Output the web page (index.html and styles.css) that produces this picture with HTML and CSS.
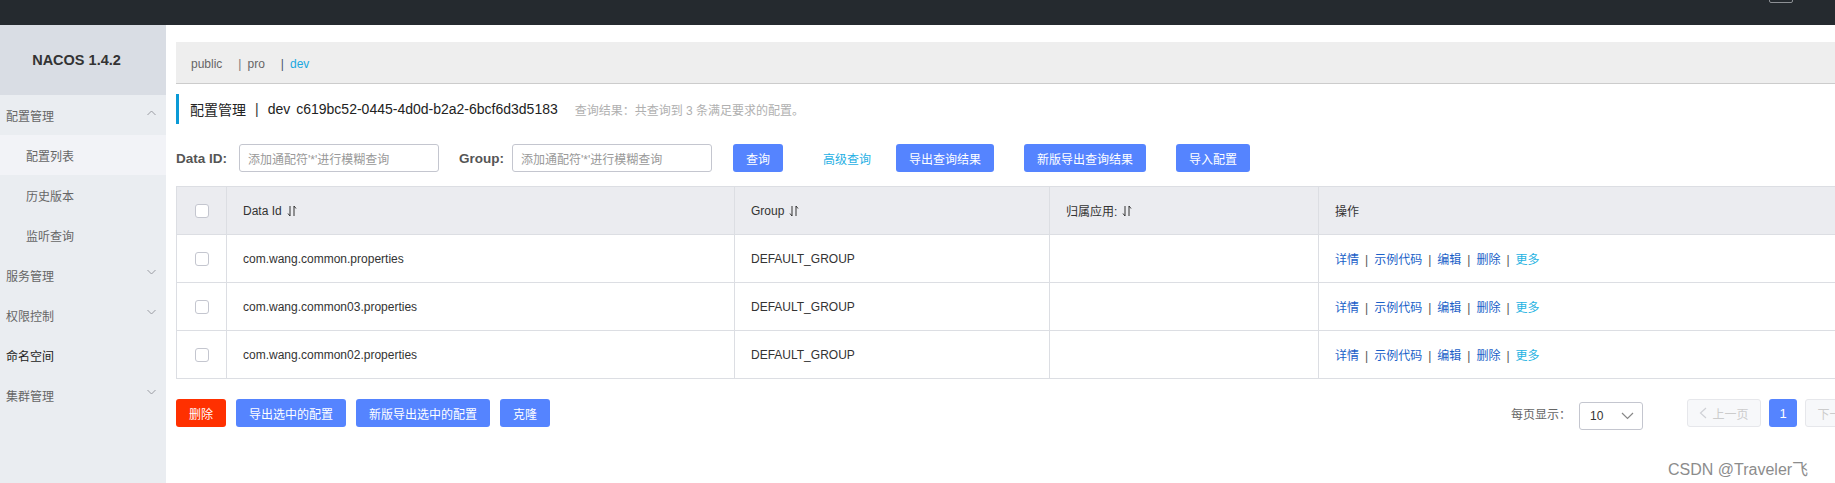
FILE: index.html
```html
<!DOCTYPE html>
<html lang="zh-CN">
<head>
<meta charset="utf-8">
<title>NACOS 1.4.2</title>
<link rel="stylesheet" href="styles.css">
</head>
<body>
<header class="topbar"><div class="lang-box"></div></header>
<div class="layout">
  <aside class="sidebar">
    <div class="logo">NACOS 1.4.2</div>
    <ul class="menu">
      <li class="menu-item"><span>配置管理</span><svg class="chev" width="9" height="6" viewBox="0 0 9 6"><path d="M0.5 5 L4.5 1 L8.5 5" fill="none" stroke="#9a9ca3" stroke-width="1"/></svg></li>
      <li class="sub-item active">配置列表</li>
      <li class="sub-item">历史版本</li>
      <li class="sub-item">监听查询</li>
      <li class="menu-item"><span>服务管理</span><svg class="chev down" width="9" height="6" viewBox="0 0 9 6"><path d="M0.5 1 L4.5 5 L8.5 1" fill="none" stroke="#9a9ca3" stroke-width="1"/></svg></li>
      <li class="menu-item"><span>权限控制</span><svg class="chev down" width="9" height="6" viewBox="0 0 9 6"><path d="M0.5 1 L4.5 5 L8.5 1" fill="none" stroke="#9a9ca3" stroke-width="1"/></svg></li>
      <li class="menu-item dark"><span>命名空间</span></li>
      <li class="menu-item"><span>集群管理</span><svg class="chev down" width="9" height="6" viewBox="0 0 9 6"><path d="M0.5 1 L4.5 5 L8.5 1" fill="none" stroke="#9a9ca3" stroke-width="1"/></svg></li>
    </ul>
  </aside>
  <main class="main">
    <div class="content">
      <div class="ns-bar">
        <span class="ns">public</span>
        <span class="ns"><span class="ns-pipe">|</span>pro</span>
        <span class="ns current"><span class="ns-pipe dark">|</span>dev</span>
      </div>

      <div class="page-title">
        <span class="title-main">配置管理</span>
        <span class="title-sep">|</span>
        <span>dev</span>
        <span class="title-id">c619bc52-0445-4d0d-b2a2-6bcf6d3d5183</span>
        <span class="title-info">查询结果：共查询到 3 条满足要求的配置。</span>
      </div>

      <div class="search-row">
        <span class="label label-id">Data ID:</span>
        <div class="input"><span class="placeholder">添加通配符'*'进行模糊查询</span></div>
        <span class="label label-group">Group:</span>
        <div class="input"><span class="placeholder">添加通配符'*'进行模糊查询</span></div>
        <span class="btn btn-primary btn-query">查询</span>
        <span class="link-adv">高级查询</span>
        <span class="btn btn-primary btn-export">导出查询结果</span>
        <span class="btn btn-primary btn-gap30">新版导出查询结果</span>
        <span class="btn btn-primary btn-gap30">导入配置</span>
      </div>

      <table class="grid">
        <colgroup>
          <col class="c-check"><col class="c-id"><col class="c-group"><col class="c-app"><col class="c-op">
        </colgroup>
        <thead>
          <tr>
            <th class="cell-check"><span class="checkbox"></span></th>
            <th><span class="th-inner">Data Id<svg class="sort" width="10" height="12" viewBox="0 0 10 12"><path d="M3 1 V11 L1 8.5 M7 11 V1 L9 3.5" fill="none" stroke="#333" stroke-width="1"/></svg></span></th>
            <th><span class="th-inner">Group<svg class="sort" width="10" height="12" viewBox="0 0 10 12"><path d="M3 1 V11 L1 8.5 M7 11 V1 L9 3.5" fill="none" stroke="#333" stroke-width="1"/></svg></span></th>
            <th><span class="th-inner">归属应用:<svg class="sort" width="10" height="12" viewBox="0 0 10 12"><path d="M3 1 V11 L1 8.5 M7 11 V1 L9 3.5" fill="none" stroke="#333" stroke-width="1"/></svg></span></th>
            <th>操作</th>
          </tr>
        </thead>
        <tbody>
          <tr>
            <td class="cell-check"><span class="checkbox"></span></td>
            <td>com.wang.common.properties</td>
            <td>DEFAULT_GROUP</td>
            <td></td>
            <td class="ops"><a>详情</a><span class="op-sep">|</span><a>示例代码</a><span class="op-sep">|</span><a>编辑</a><span class="op-sep">|</span><a>删除</a><span class="op-sep">|</span><a class="more">更多</a></td>
          </tr>
          <tr>
            <td class="cell-check"><span class="checkbox"></span></td>
            <td>com.wang.common03.properties</td>
            <td>DEFAULT_GROUP</td>
            <td></td>
            <td class="ops"><a>详情</a><span class="op-sep">|</span><a>示例代码</a><span class="op-sep">|</span><a>编辑</a><span class="op-sep">|</span><a>删除</a><span class="op-sep">|</span><a class="more">更多</a></td>
          </tr>
          <tr>
            <td class="cell-check"><span class="checkbox"></span></td>
            <td>com.wang.common02.properties</td>
            <td>DEFAULT_GROUP</td>
            <td></td>
            <td class="ops"><a>详情</a><span class="op-sep">|</span><a>示例代码</a><span class="op-sep">|</span><a>编辑</a><span class="op-sep">|</span><a>删除</a><span class="op-sep">|</span><a class="more">更多</a></td>
          </tr>
        </tbody>
      </table>

      <div class="footer-row">
        <div class="batch">
          <span class="btn btn-danger">删除</span>
          <span class="btn btn-primary">导出选中的配置</span>
          <span class="btn btn-primary">新版导出选中的配置</span>
          <span class="btn btn-primary">克隆</span>
        </div>
        <div class="pager">
          <span class="page-size-label">每页显示：</span>
          <div class="select"><span>10</span><svg width="13" height="8" viewBox="0 0 13 8"><path d="M1 1 L6.5 6.5 L12 1" fill="none" stroke="#888" stroke-width="1.2"/></svg></div>
          <span class="page-btn disabled prev"><svg width="8" height="12" viewBox="0 0 8 12"><path d="M7 1 L1.5 6 L7 11" fill="none" stroke="#cfd1d6" stroke-width="1.2"/></svg>上一页</span>
          <span class="page-num">1</span>
          <span class="page-btn disabled next">下一页<svg width="8" height="12" viewBox="0 0 8 12"><path d="M1 1 L6.5 6 L1 11" fill="none" stroke="#cfd1d6" stroke-width="1.2"/></svg></span>
        </div>
      </div>
    </div>
  </main>
</div>
<div class="watermark">CSDN @Traveler飞</div>
</body>
</html>
```

FILE: styles.css
```css
* { box-sizing: border-box; }
html, body {
  margin: 0;
  padding: 0;
  width: 1835px;
  height: 483px;
  overflow: hidden;
  background: #fff;
  font-family: "Liberation Sans", "Noto Sans CJK SC", sans-serif;
  font-size: 12px;
  color: #333;
}
.topbar {
  height: 25px;
  background: #252a2f;
  display: flex;
  justify-content: flex-end;
  padding-right: 42px;
  overflow: hidden;
}
.lang-box {
  width: 24px;
  height: 23px;
  margin-top: -20px;
  border: 1px solid #8d9095;
  border-radius: 2px;
}
.layout {
  display: flex;
  height: 458px;
}
.sidebar {
  width: 166px;
  flex-shrink: 0;
  background: #eaedf1;
}
.logo {
  height: 70px;
  background: #d9dde4;
  display: flex;
  align-items: center;
  justify-content: center;
  padding-right: 13px;
  font-weight: bold;
  font-size: 14.5px;
  color: #333;
}
.menu {
  list-style: none;
  margin: 0;
  padding: 0;
}
.menu-item, .sub-item {
  height: 40px;
  display: flex;
  align-items: center;
  justify-content: space-between;
  font-size: 12px;
  color: #666;
}
.menu-item { padding: 0 10px 0 6px; }
.sub-item { padding-left: 26px; }
.sub-item.active { background: #f2f3f7; }
.menu-item.dark { color: #222; }
.chev { margin-top: -4px; }
.chev.down { margin-top: -6px; }

.main {
  flex: 1;
  overflow: hidden;
  padding: 17px 0 0 10px;
}
.content { width: 1703px; }

.ns-bar {
  height: 42px;
  background: #eee;
  border-bottom: 1px solid #ccc;
  display: flex;
  align-items: center;
  padding: 3px 0 0 15px;
  color: #666;
  font-size: 12px;
}
.ns { margin-right: 16px; }
.ns-pipe { margin-right: 6px; color: #777; }
.ns-pipe.dark { color: #4a5270; }
.ns.current { color: #1aa8e0; }

.page-title {
  margin-top: 10px;
  height: 30px;
  border-left: 3px solid #0a9ad6;
  padding-left: 11px;
  display: flex;
  align-items: center;
  font-size: 14px;
  color: #222;
}
.title-sep { margin: 0 9px; color: #333; }
.title-id { margin-left: 6px; }
.title-info { margin-left: 17px; font-size: 12px; color: #b0b0b0; }

.search-row {
  margin-top: 20px;
  height: 28px;
  display: flex;
  align-items: center;
}
.label {
  font-weight: bold;
  font-size: 13.5px;
  color: #555;
}
.label-id { width: 63px; }
.label-group { width: 53px; margin-left: 20px; }
.input {
  width: 200px;
  height: 28px;
  border: 1px solid #c4c6cf;
  border-radius: 3px;
  padding: 0 8px;
  display: flex;
  align-items: center;
}
.placeholder { color: #999; font-size: 12px; white-space: nowrap; }
.btn {
  height: 28px;
  padding: 0 13px;
  border-radius: 3px;
  display: inline-flex;
  align-items: center;
  justify-content: center;
  color: #fff;
  font-size: 12px;
  white-space: nowrap;
}
.btn-primary { background: #5584ff; }
.btn-danger { background: #ff3000; }
.btn-query { margin-left: 21px; }
.link-adv { margin-left: 40px; color: #1fb0e4; font-size: 12px; }
.btn-export { margin-left: 25px; }
.btn-gap30 { margin-left: 30px; }

.grid {
  margin-top: 14px;
  width: 100%;
  table-layout: fixed;
  border-collapse: collapse;
  border: 1px solid #dcdee3;
  font-size: 12px;
  color: #333;
}
.c-check { width: 50px; }
.c-id { width: 508px; }
.c-group { width: 315px; }
.c-app { width: 269px; }
.grid tr { height: 48px; }
.grid th, .grid td {
  border: 1px solid #dcdee3;
  padding: 0 16px;
  text-align: left;
  vertical-align: middle;
  font-weight: normal;
  white-space: nowrap;
}
.grid th { background: #ebecf0; }
.grid .cell-check { padding: 0; text-align: center; }
.checkbox {
  display: inline-block;
  width: 14px;
  height: 14px;
  border: 1px solid #c4c6cf;
  border-radius: 3px;
  background: #fff;
  vertical-align: middle;
}
.th-inner { display: inline-flex; align-items: center; }
.sort { margin-left: 5px; }
.ops a { color: #1a5fc8; }
.ops a.more { color: #26b3e2; }
.op-sep { margin: 0 6px; color: #555; }

.footer-row {
  margin-top: 20px;
  height: 28px;
  display: flex;
  justify-content: space-between;
  align-items: center;
}
.batch { display: flex; gap: 10px; }
.pager { display: flex; align-items: center; }
.page-size-label { color: #666; font-size: 12px; }
.select {
  margin-left: 8px;
  margin-top: 6px;
  width: 64px;
  height: 28px;
  border: 1px solid #c4c6cf;
  border-radius: 3px;
  padding: 0 8px 0 10px;
  display: flex;
  align-items: center;
  justify-content: space-between;
  color: #333;
  font-size: 12px;
}
.page-btn {
  height: 28px;
  width: 74px;
  border: 1px solid #e6e7eb;
  background: #f7f8fa;
  border-radius: 3px;
  color: #ccc;
  display: flex;
  align-items: center;
  justify-content: center;
  gap: 5px;
  font-size: 12px;
}
.prev { margin-left: 44px; }
.next { margin-left: 8px; }
.page-num {
  margin-left: 8px;
  width: 28px;
  height: 28px;
  border-radius: 3px;
  background: #5584ff;
  color: #fff;
  display: flex;
  align-items: center;
  justify-content: center;
  font-size: 13px;
}
.watermark {
  position: absolute;
  left: 1668px;
  top: 456px;
  font-size: 16px;
  color: #8c8c8c;
  white-space: nowrap;
}
```
